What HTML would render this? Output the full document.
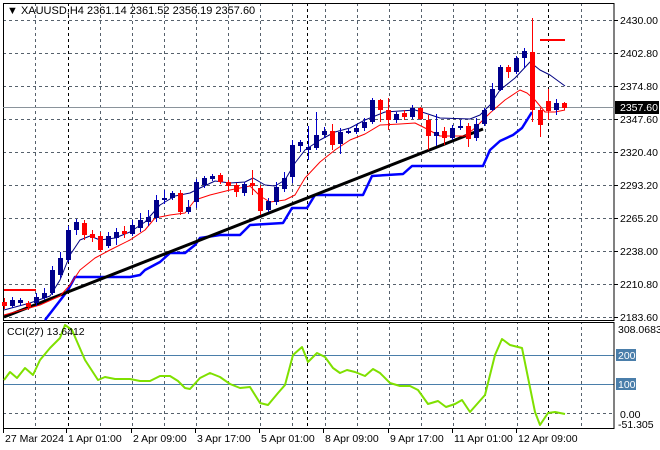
<!DOCTYPE html>
<html><head><meta charset="utf-8"><style>
html,body{margin:0;padding:0;background:#fff;}
svg{display:block;font-family:"Liberation Sans",sans-serif;}
</style></head><body>
<svg id="s" width="660" height="450" xmlns="http://www.w3.org/2000/svg">
<rect width="660" height="450" fill="#fff"/>
<g id="grid" shape-rendering="crispEdges"></g>
<g id="plot"></g>
<text x="7" y="14" font-size="11" fill="#000">▼ XAUUSD,H4  2361.14 2361.52 2356.19 2357.60</text>
<text x="7" y="335" font-size="10.5" fill="#000">CCI(27) 13.6412</text>
</svg>
<script>
var NS="http://www.w3.org/2000/svg";
var g=document.getElementById('grid'),p=document.getElementById('plot'),s=document.getElementById('s');
function el(par,t,a,txt){var e=document.createElementNS(NS,t);for(var k in a)e.setAttribute(k,a[k]);if(txt!=null)e.textContent=txt;par.appendChild(e);return e;}
var GC='#56616c';
var hy=[20,53,86,119,152,185,218,251,284,317],hl=["2430.00","2402.80","2374.80","2347.60","2320.40","2293.20","2265.20","2238.00","2210.80","2183.60"];
hy.forEach(function(y,i){el(g,'line',{x1:3,x2:614,y1:y+.5,y2:y+.5,stroke:GC,'stroke-width':1,'stroke-dasharray':'3,3'});
 el(g,'line',{x1:614,x2:618,y1:y+.5,y2:y+.5,stroke:'#000'});
 el(s,'text',{x:620,y:y+4,'font-size':10.5,fill:'#000'},hl[i]);});
var vx=[35,100,132,164,196,228,260,292,325,357,389,421,453,485,517,581];
vx.forEach(function(xx){el(g,'line',{x1:xx+.5,x2:xx+.5,y1:3,y2:429,stroke:GC,'stroke-width':1,'stroke-dasharray':'3,3'});});
[68,307,548].forEach(function(xx){el(g,'line',{x1:xx+.5,x2:xx+.5,y1:3,y2:429,stroke:'#000','stroke-dasharray':'3,3'});});
el(g,'rect',{x:3,y:320,width:611,height:3,fill:'#fff'});
el(g,'line',{x1:3,x2:614,y1:355.5,y2:355.5,stroke:'#4a7eaa'});
el(g,'line',{x1:3,x2:614,y1:384.5,y2:384.5,stroke:'#4a7eaa'});
el(g,'line',{x1:3,x2:614,y1:413.5,y2:413.5,stroke:GC,'stroke-dasharray':'3,3'});
el(g,'rect',{x:3.5,y:3.5,width:610.5,height:317,fill:'none',stroke:'#000'});
el(g,'rect',{x:3.5,y:322.5,width:610.5,height:106,fill:'none',stroke:'#000'});
el(g,'line',{x1:3,x2:614,y1:107.5,y2:107.5,stroke:'#8a939b'});
function pl(pts,c,w){el(p,'polyline',{points:pts.map(function(q){return q.join(',')}).join(' '),fill:'none',stroke:c,'stroke-width':w,'stroke-linejoin':'round'});}
pl([[45,320],[62,298],[68,290],[75,277],[130,277],[140,275],[145,270],[160,262],[170,253],[185,253],[195,245],[200,238],[220,235],[240,235],[250,225],[283,223],[292,208],[307,208],[315,195],[363,195],[372,176],[403,174],[412,166],[483,166],[490,150],[500,141],[513,135],[522,128],[532,112]],'#0000ff',2.5);
pl([[4,317],[483,129]],'#000',3);
pl([[4,315],[40,305],[60,296],[70,285],[80,270],[95,258],[110,250],[130,240],[145,230],[155,218],[170,215],[185,213],[195,200],[210,195],[230,190],[250,186],[260,196],[270,202],[285,200],[295,195],[305,178],[320,162],[335,150],[350,140],[365,134],[380,125],[400,124],[415,123],[425,128],[440,136],[465,136],[475,128],[490,113],[505,100],[520,90],[527,93],[535,100],[545,112],[555,112],[565,110]],'#ff0000',1);
pl([[4,310],[30,303],[50,296],[60,280],[70,255],[80,240],[90,236],[100,240],[115,238],[130,232],[145,222],[160,205],[175,196],[190,193],[200,188],[215,181],[230,183],[245,182],[253,178],[265,185],[275,186],[285,180],[295,163],[305,150],[320,140],[335,132],[350,128],[365,120],[385,112],[415,110],[425,113],[440,118],[470,119],[480,115],[490,105],[500,90],[515,78],[530,62],[540,70],[550,75],[565,86]],'#000080',1);
el(p,'line',{x1:4,x2:36,y1:290,y2:290,stroke:'#ff0000','stroke-width':2});
el(p,'line',{x1:540,x2:565,y1:40,y2:40,stroke:'#ff0000','stroke-width':2});
var C=[[302,306,298,309],[306,300,297,308],[303,300,298,306],[303,307,301,310],[303,297,293,306],[298,293,288,300],[293,270,266,295],[275,258,252,278],[260,230,226,262],[230,222,219,235],[223,235,220,240],[234,238,230,242],[236,250,232,252],[246,236,232,248],[238,232,228,245],[231,234,226,238],[234,225,220,236],[228,220,213,232],[222,217,210,226],[218,200,195,222],[200,198,190,204],[198,193,191,200],[193,212,190,215],[212,207,200,214],[202,182,179,208],[185,178,176,188],[179,176,174,181],[175,182,173,184],[182,186,180,190],[185,192,183,197],[193,184,182,196],[183,186,170,195],[188,211,185,215],[210,201,198,212],[202,187,182,205],[189,178,172,192],[177,145,140,183],[146,142,140,152],[150,147,126,160],[148,135,112,150],[135,131,127,138],[131,145,124,150],[144,132,128,154],[133,131,129,134],[132,128,124,134],[128,122,118,131],[122,100,98,124],[100,110,99,122],[110,120,98,130],[120,114,112,123],[113,117,110,120],[117,108,105,119],[108,119,107,120],[120,136,115,150],[136,132,114,146],[131,138,127,145],[138,128,125,140],[128,126,120,130],[126,139,123,147],[138,124,118,141],[124,110,108,126],[110,89,83,111],[90,67,65,91],[67,72,65,78],[72,58,56,74],[58,51,48,68],[52,110,18,122],[110,125,108,137],[101,111,89,120],[110,103,99,115],[103,108,102,110]];
C.forEach(function(c,i){var x=4+8*i,bull=c[1]<c[0],col=bull?'#00008b':'#ff0000';
 el(p,'line',{x1:x+.5,x2:x+.5,y1:c[2],y2:c[3],stroke:bull?'#0000cc':'#ff0000'});
 var t=Math.min(c[0],c[1]),h=Math.max(2,Math.abs(c[0]-c[1]));
 el(p,'rect',{x:x-2,y:t,width:5,height:h,fill:col});});
pl([[4,380],[10,372],[17,378],[25,368],[33,375],[40,360],[50,348],[60,338],[65,325],[72,330],[85,360],[98,380],[105,377],[115,379],[130,379],[140,381],[150,381],[160,376],[170,376],[178,381],[185,388],[190,389],[200,378],[210,373],[220,377],[230,384],[240,388],[250,387],[260,403],[268,405],[278,393],[285,385],[293,355],[302,347],[308,362],[317,353],[325,357],[333,368],[340,373],[347,370],[355,372],[365,376],[373,369],[380,373],[390,383],[400,386],[410,386],[418,390],[428,404],[438,401],[446,407],[455,404],[462,400],[470,412],[485,395],[495,355],[502,339],[510,345],[522,348],[535,412],[540,425],[548,413],[555,412],[565,414]],'#7fe000',2);
el(s,'rect',{x:615,y:101,width:44,height:13,fill:'#000'});
el(s,'text',{x:620,y:111,'font-size':10.5,fill:'#fff'},'2357.60');
el(s,'text',{x:618,y:333,'font-size':10.5,fill:'#000'},'308.0683');
el(s,'rect',{x:616,y:349,width:20,height:12,fill:'#4a7eaa'});
el(s,'text',{x:618,y:359,'font-size':10.5,fill:'#fff'},'200');
el(s,'rect',{x:616,y:378,width:20,height:12,fill:'#4a7eaa'});
el(s,'text',{x:618,y:388,'font-size':10.5,fill:'#fff'},'100');
el(s,'text',{x:620,y:418,'font-size':10.5,fill:'#000'},'0.00');
el(s,'text',{x:618,y:428,'font-size':10.5,fill:'#000'},'-51.305');
var T=[[3,'27 Mar 2024'],[66,'1 Apr 01:00'],[131,'2 Apr 09:00'],[195,'3 Apr 17:00'],[259,'5 Apr 01:00'],[323,'8 Apr 09:00'],[388,'9 Apr 17:00'],[452,'11 Apr 01:00'],[516,'12 Apr 09:00']];
T.forEach(function(t){el(s,'line',{x1:t[0]+0.5,x2:t[0]+0.5,y1:429,y2:433,stroke:'#000'});el(s,'text',{x:t[0]+2,y:442,'font-size':10.5,fill:'#000'},t[1]);});
</script>
</body></html>
